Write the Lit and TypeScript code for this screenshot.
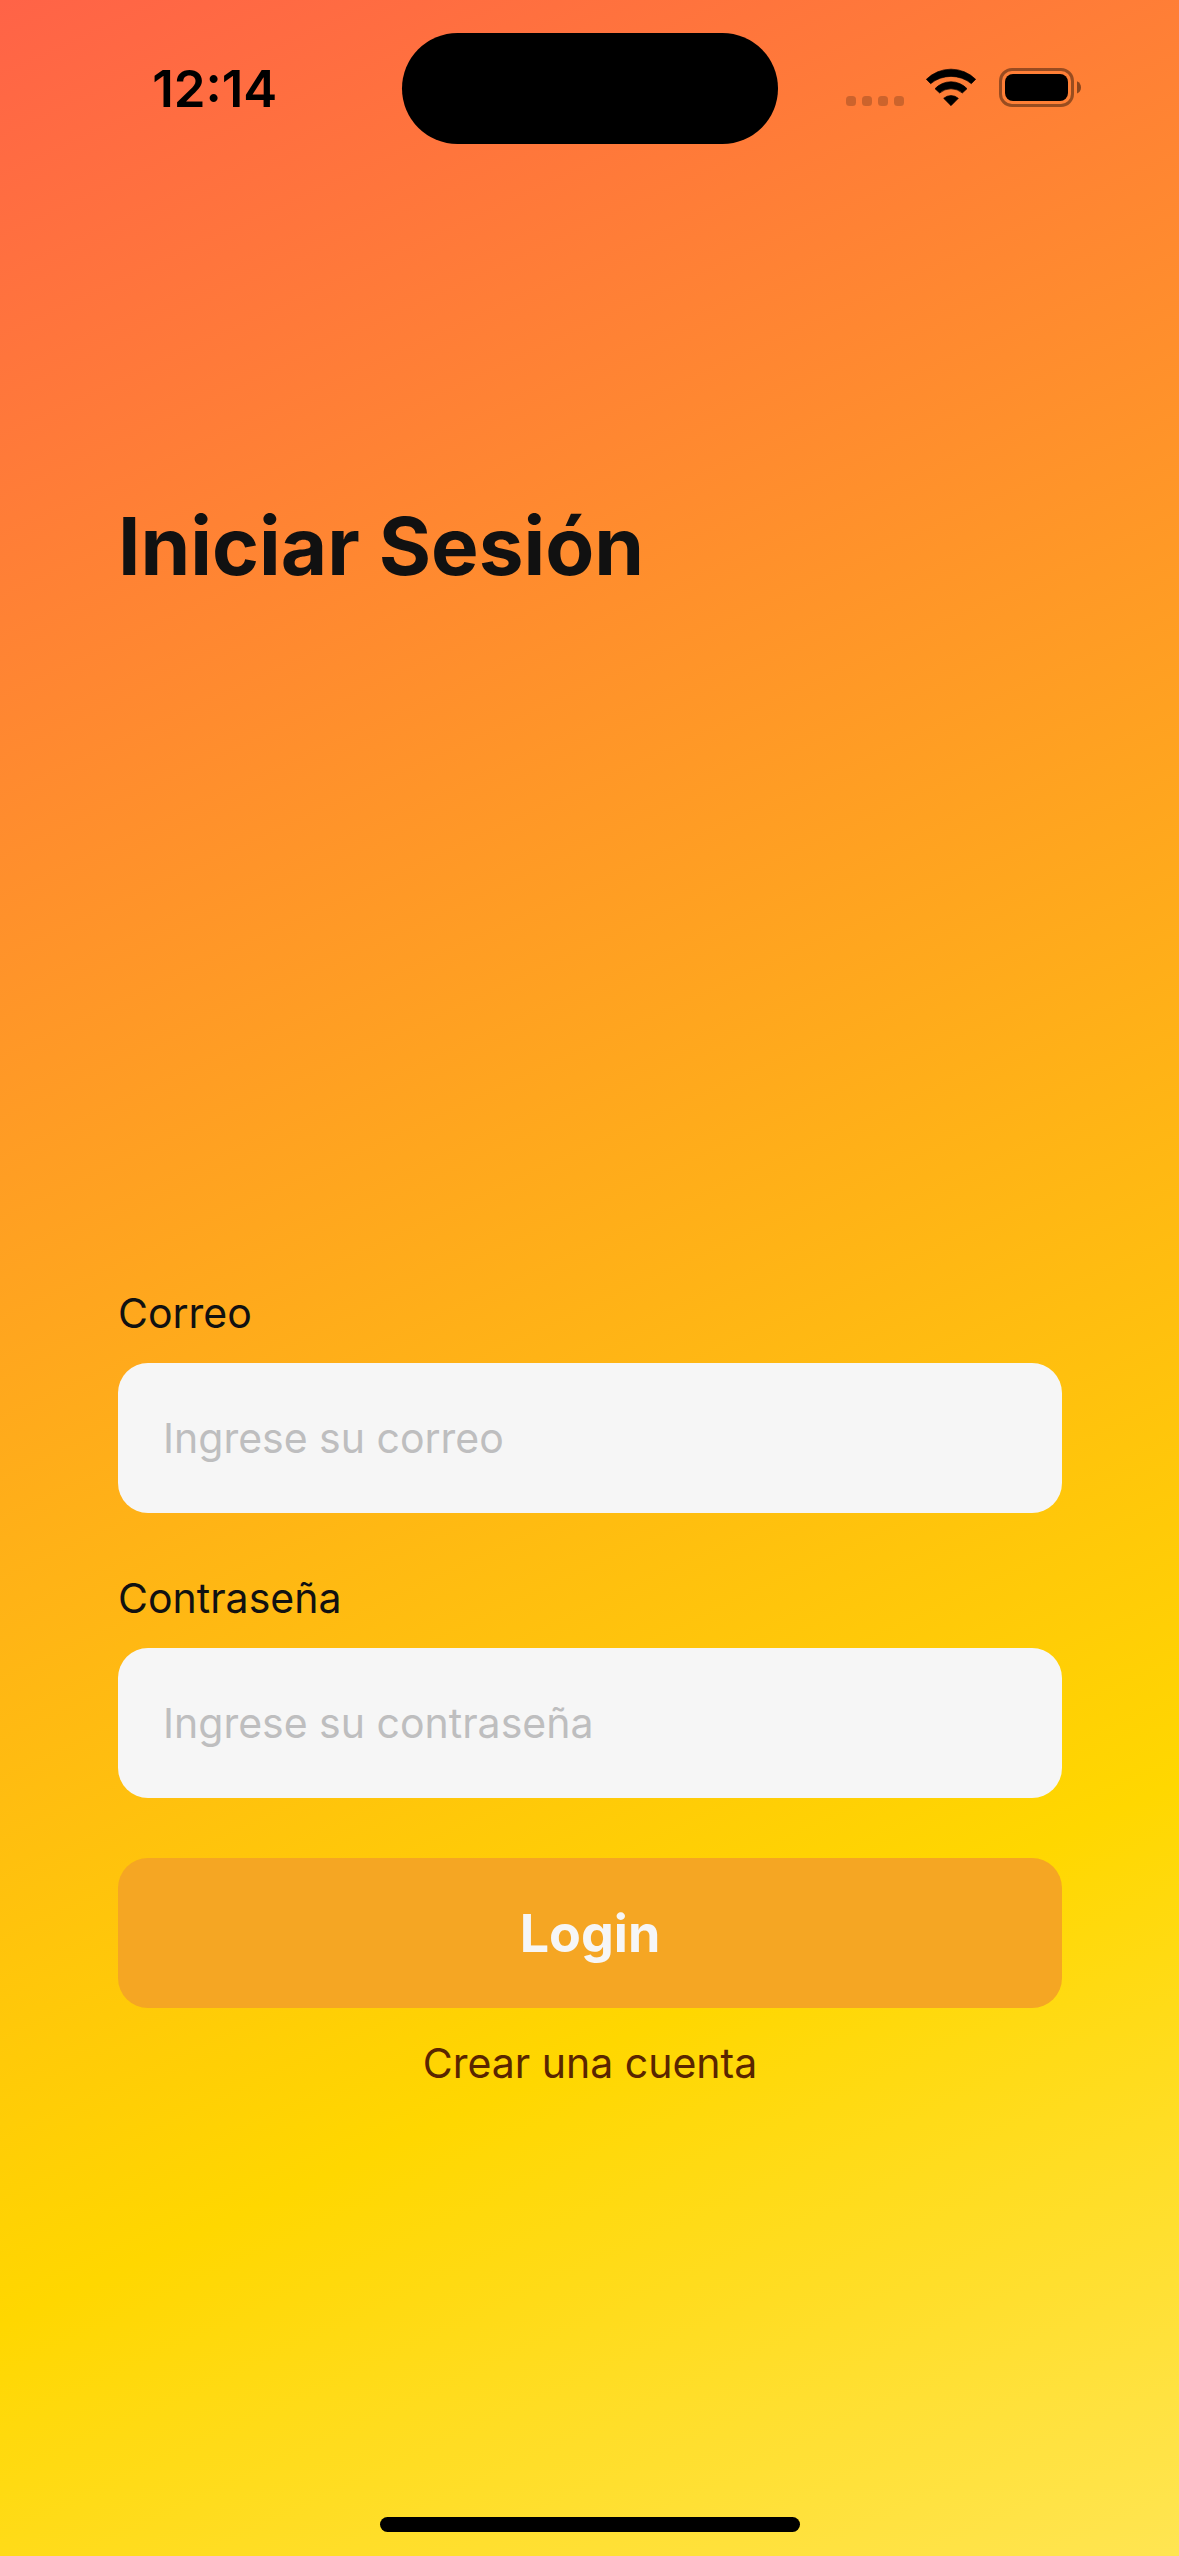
import { LitElement, html, css } from "lit";
import { customElement, property } from "lit/decorators.js";

@customElement("status-bar")
class StatusBar extends LitElement {
  @property() time = "";

  static styles = css`
    :host {
      display: grid;
      grid-template-columns: 1fr 376px 1fr;
      align-items: center;
      padding-top: 33px;
      color: #000;
    }
    .time {
      padding-left: 28px;
      text-align: center;
      font-size: 51px;
      line-height: 60px;
      font-weight: 600;
    }
    .island {
      height: 111px;
      border-radius: 56px;
      background: #000;
    }
    .indicators {
      display: flex;
      align-items: center;
      justify-content: flex-end;
      gap: 22px;
      padding-right: 96px;
    }
    svg {
      display: block;
      flex: none;
    }
  `;

  render() {
    return html`
      <div class="time">${this.time}</div>
      <div class="island"></div>
      <div class="indicators">
        <svg width="58" height="41" viewBox="0 0 58 41" fill-opacity="0.2" aria-hidden="true">
          <rect x="0" y="28" width="10" height="10" rx="3.5" />
          <rect x="16" y="28" width="10" height="10" rx="3.5" />
          <rect x="32" y="28" width="10" height="10" rx="3.5" />
          <rect x="48" y="28" width="10" height="10" rx="3.5" />
        </svg>
        <svg width="51" height="41" viewBox="0 0 153 123" stroke="#000" stroke-width="2" stroke-linejoin="round" aria-hidden="true">
          <path d="M1 34A105 105 0 0 1 149 34L136 47A96 96 0 0 0 14 47Z" />
          <path d="M27 62A66 66 0 0 1 123 62L109 75A52 52 0 0 0 41 75Z" />
          <path d="M53 91A33 33 0 0 1 97 91L75 113Z" />
        </svg>
        <svg width="84" height="41" viewBox="0 0 84 41" aria-hidden="true">
          <rect x="1.5" y="1.5" width="72" height="36" rx="11.5" fill="none" stroke="#000" stroke-width="3" stroke-opacity="0.4" />
          <rect x="6" y="6" width="63" height="27" rx="8" />
          <path d="M78 13.3C80.6 14.4 82 16.7 82 19.4S80.6 24.4 78 25.5Z" fill-opacity="0.45" />
        </svg>
      </div>
    `;
  }
}

@customElement("text-field")
class TextField extends LitElement {
  @property() label = "";
  @property() type = "text";
  @property() placeholder = "";

  static styles = css`
    :host {
      display: block;
    }
    .label {
      display: block;
      margin-bottom: 25px;
      font-size: 41px;
      line-height: 50px;
      color: #111;
    }
    .input {
      display: block;
      box-sizing: border-box;
      width: 100%;
      height: 150px;
      margin: 0;
      padding: 0 45px;
      border: 0;
      border-radius: 30px;
      background: #f6f6f6;
      color: #111;
      font-family: inherit;
      font-size: 41px;
    }
    .input::placeholder {
      color: #bebebf;
      opacity: 1;
    }
  `;

  render() {
    return html`
      <label class="label" for="field">${this.label}</label>
      <input class="input" id="field" type=${this.type} placeholder=${this.placeholder} />
    `;
  }
}

@customElement("app-root")
class AppRoot extends LitElement {
  static styles = css`
    :host {
      display: flex;
      flex-direction: column;
      box-sizing: border-box;
      min-height: 100vh;
      padding-bottom: 24px;
      font-family: Inter, "Liberation Sans", sans-serif;
      background: linear-gradient(155.24deg, #ff6347 0%, #ffd700 75%, #ffe552 100%);
    }
    .content {
      display: flex;
      flex-direction: column;
      padding: 0 117px 0 118px;
    }
    .title {
      margin: 352px 0 0;
      font-size: 80px;
      line-height: 100px;
      font-weight: 700;
      color: #111;
    }
    .form {
      display: flex;
      flex-direction: column;
      gap: 60px;
      margin-top: 692px;
    }
    .login {
      height: 150px;
      padding: 0;
      border: 0;
      border-radius: 30px;
      background: #f5a623;
      color: #f6f6f6;
      font-family: inherit;
      font-size: 52px;
      font-weight: 700;
    }
    .register {
      align-self: center;
      margin-top: 30px;
      font-size: 41px;
      line-height: 50px;
      color: #5a2600;
      text-decoration: none;
    }
    .home {
      width: 420px;
      height: 15px;
      margin: auto auto 0;
      border-radius: 8px;
      background: #000;
    }
  `;

  render() {
    return html`
      <status-bar time="12:14"></status-bar>
      <main class="content">
        <h1 class="title">Iniciar Sesión</h1>
        <form class="form" @submit=${(e: Event) => e.preventDefault()}>
          <text-field label="Correo" type="email" placeholder="Ingrese su correo"></text-field>
          <text-field label="Contraseña" type="password" placeholder="Ingrese su contraseña"></text-field>
          <button class="login" type="submit">Login</button>
        </form>
        <a class="register" href="#registro">Crear una cuenta</a>
      </main>
      <div class="home"></div>
    `;
  }
}
